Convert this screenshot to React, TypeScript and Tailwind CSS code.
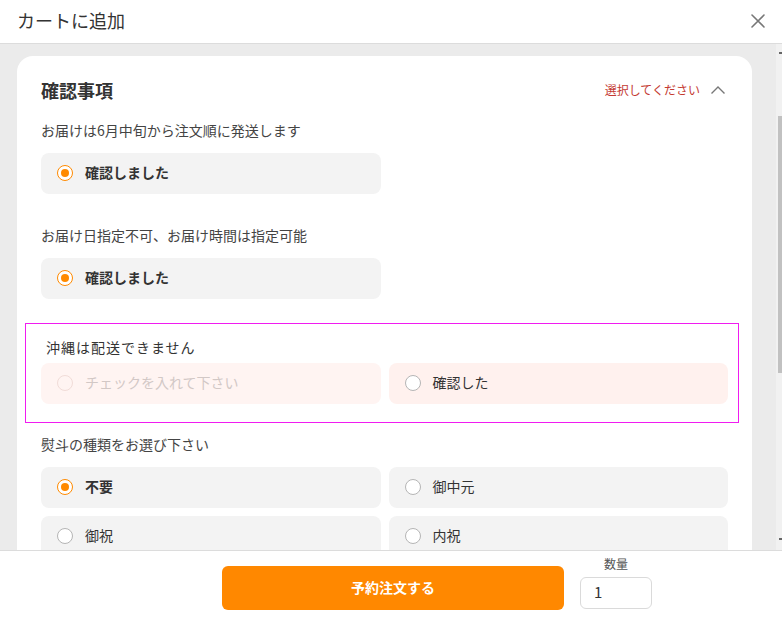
import React from "react";

const font = { fontFamily: '"Noto Sans CJK JP", "Noto Sans", sans-serif' };

function Radio({ checked, faded }: { checked?: boolean; faded?: boolean }) {
  if (checked) {
    return (
      <span className="flex h-[16px] w-[16px] shrink-0 items-center justify-center rounded-full border border-[#ff8a00] bg-white">
        <span className="h-[8px] w-[8px] rounded-full bg-[#ff8a00]" />
      </span>
    );
  }
  return (
    <span
      className={
        faded
          ? "h-[16px] w-[16px] shrink-0 rounded-full border border-[#f1dcd8] bg-[#fff4f2]"
          : "h-[16px] w-[16px] shrink-0 rounded-full border border-[#b5b5b5] bg-white"
      }
    />
  );
}

function Option({
  label,
  checked,
  pink,
  faded,
}: {
  label: string;
  checked?: boolean;
  pink?: boolean;
  faded?: boolean;
}) {
  const bg = faded ? "bg-[#fff4f2]" : pink ? "bg-[#fff1ee]" : "bg-[#f3f3f3]";
  const text = faded
    ? "text-[#d2c8c6] font-normal"
    : checked
    ? "text-[#333] font-bold"
    : "text-[#333] font-normal";
  return (
    <div className={`flex h-[41px] items-center gap-[12px] rounded-[8px] pb-[2px] pl-[16px] ${bg}`}>
      <Radio checked={checked} faded={faded} />
      <span className={`-mt-[2px] text-[14px] leading-[20px] ${text}`}>{label}</span>
    </div>
  );
}

function Question({ text, className }: { text: string; className?: string }) {
  return (
    <div className={`text-[14px] leading-[20px] text-[#444] ${className ?? ""}`}>{text}</div>
  );
}

export default function App() {
  return (
    <div className="flex h-[622px] w-[782px] flex-col overflow-hidden bg-white" style={font}>
      {/* Header */}
      <div className="flex h-[44px] shrink-0 items-center justify-between border-b border-[#dcdcdc] pl-[17px] pr-[16px]">
        <span className="-mt-[4px] text-[18px] leading-[26px] text-[#333]">カートに追加</span>
        <svg width="16" height="16" viewBox="0 0 16 16" className="-mt-[2px]">
          <path d="M2 2 L14 14 M14 2 L2 14" stroke="#777" strokeWidth="1.6" strokeLinecap="round" />
        </svg>
      </div>

      {/* Body */}
      <div className="flex h-[506px] shrink-0">
        <div className="flex-1 overflow-hidden bg-[#ebebeb] pl-[17px] pr-[24px] pt-[12px]">
          <div className="rounded-t-[16px] bg-white px-[24px] pt-[20px] pb-[40px]">
            <div className="flex h-[28px] items-center justify-between">
              <span className="text-[18px] font-bold leading-[28px] text-[#333]">確認事項</span>
              <div className="flex items-center gap-[10px] pr-[2px]">
                <span className="text-[12px] leading-[16px] text-[#c43a32]">選択してください</span>
                <svg width="16" height="10" viewBox="0 0 16 10">
                  <path d="M1.5 8.5 L8 2 L14.5 8.5" stroke="#777" strokeWidth="1.4" fill="none" />
                </svg>
              </div>
            </div>

            <Question text="お届けは6月中旬から注文順に発送します" className="mt-[16px]" />
            <div className="mt-[13px] grid grid-cols-2 gap-[8px]">
              <Option label="確認しました" checked />
            </div>

            <Question text="お届け日指定不可、お届け時間は指定可能" className="mt-[31px]" />
            <div className="mt-[13px] grid grid-cols-2 gap-[8px]">
              <Option label="確認しました" checked />
            </div>

            <div className="mt-[24px] -ml-[16px] -mr-[11px] border border-[#f01cf0] pb-[18px] pl-[15px] pr-[10px] pt-[13px]">
              <div className="pl-[5px] text-[14px] leading-[20px] tracking-[1px] text-[#333]">
                沖縄は配送できません
              </div>
              <div className="mt-[6px] grid grid-cols-2 gap-[8px]">
                <Option label="チェックを入れて下さい" faded />
                <Option label="確認した" pink />
              </div>
            </div>

            <Question text="熨斗の種類をお選び下さい" className="mt-[11px]" />
            <div className="mt-[13px] grid grid-cols-2 gap-[8px]">
              <Option label="不要" checked />
              <Option label="御中元" />
              <Option label="御祝" />
              <Option label="内祝" />
            </div>
          </div>
        </div>

        {/* Scrollbar (partially visible) */}
        <div className="flex w-[6px] shrink-0 flex-col bg-[#f1f1f1]">
          <div className="ml-[3px] mt-[8px] h-[2px] w-[3px] bg-[#666]" />
          <div className="ml-[2px] mt-[62px] h-[257px] w-[4px] bg-[#c1c1c1]" />
          <div className="ml-[3px] mt-[165px] h-[2px] w-[3px] bg-[#666]" />
        </div>
      </div>

      {/* Footer */}
      <div className="flex flex-1 items-start border-t border-[#dcdcdc] bg-white pl-[222px]">
        <button className="mt-[15px] flex h-[44px] w-[342px] items-center justify-center rounded-[6px] bg-[#ff8800] pb-[2px] text-[14px] font-bold text-white">
          予約注文する
        </button>
        <div className="ml-[16px] mt-[5px] flex flex-col items-center">
          <span className="text-[12px] leading-[16px] text-[#555]">数量</span>
          <div className="mt-[5px] flex h-[32px] w-[72px] items-center rounded-[6px] border border-[#dadada] bg-white pb-[2px] pl-[13px] text-[15px] text-[#333]">
            1
          </div>
        </div>
      </div>
    </div>
  );
}
